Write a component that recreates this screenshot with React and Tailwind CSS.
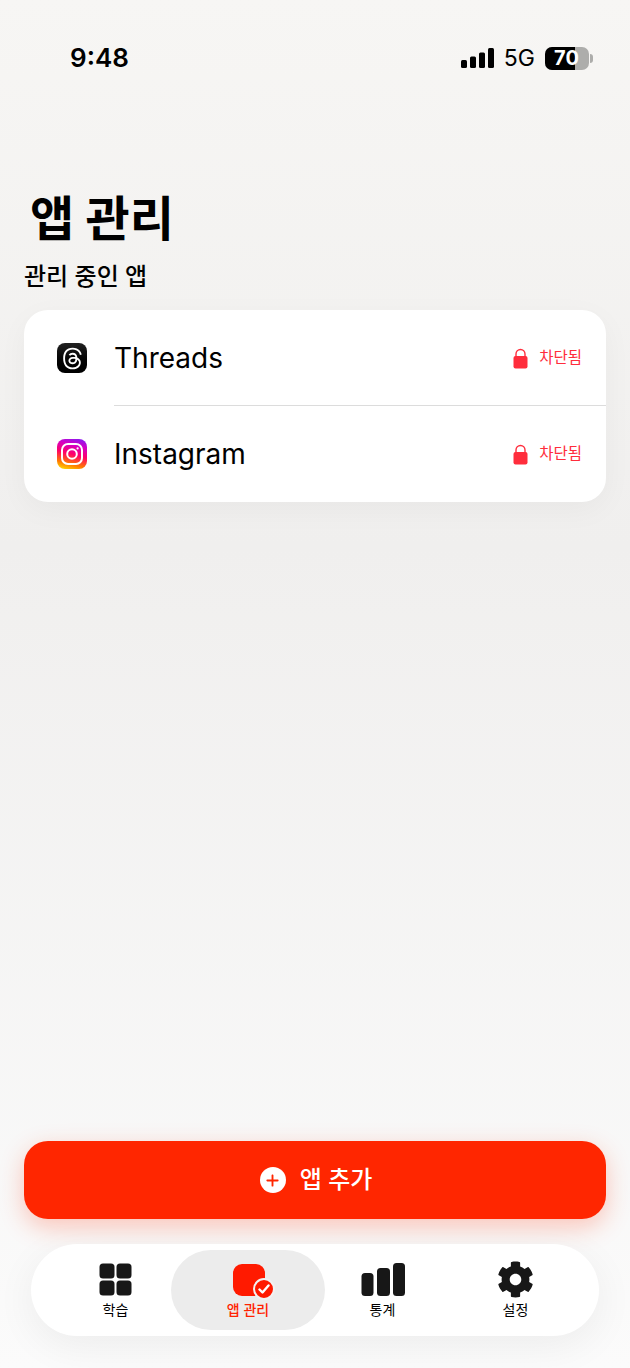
import { FaThreads, FaPlus } from 'react-icons/fa6';
import { FaCog } from 'react-icons/fa';

const sans = "font-['Inter','Noto_Sans_CJK_KR',sans-serif]";

function Signal() {
    return (
        <svg width="33" height="20" viewBox="0 0 33 20" fill="#000">
            <rect x="0" y="12" width="6" height="8" rx="1.5" />
            <rect x="9" y="8.5" width="6" height="11.5" rx="1.5" />
            <rect x="18" y="4.5" width="6" height="15.5" rx="1.5" />
            <rect x="27" y="0" width="6" height="20" rx="1.5" />
        </svg>
    );
}

function Battery() {
    return (
        <div className="flex items-center gap-[1px]">
            <div className="relative w-[44px] h-[23px] rounded-[7px] overflow-hidden bg-[#adadab]">
                <div className="absolute left-0 top-0 bottom-0 w-[30px] bg-black" />
                <span className="absolute inset-0 flex items-center justify-center pr-[1px] text-[20px] font-bold text-white leading-none">70</span>
            </div>
            <div className="w-[3px] h-[9px] rounded-r-full bg-[#adadab]" />
        </div>
    );
}

function ThreadsIcon() {
    return (
        <div className="w-[30px] h-[30px] rounded-[8px] bg-gradient-to-b from-[#222] to-black flex items-center justify-center">
            <FaThreads className="w-[23px] h-[23px] text-white" />
        </div>
    );
}

function InstagramIcon() {
    return (
        <div className="w-[30px] h-[30px] rounded-[8px] bg-[linear-gradient(15deg,#ffd600_4%,#ff7a00_22%,#ff0069_50%,#d300c5_75%,#7a20fa_100%)] flex items-center justify-center">
            <svg width="24" height="24" viewBox="0 0 24 24" fill="none" stroke="#fff" strokeWidth="2">
                <rect x="2" y="2" width="20" height="20" rx="6" />
                <circle cx="12" cy="12" r="4.8" />
                <circle cx="17.6" cy="6.4" r="1.1" fill="#fff" stroke="none" />
            </svg>
        </div>
    );
}

function Lock() {
    return (
        <svg width="15" height="21" viewBox="0 0 15 21">
            <path d="M3 10V6a4.5 4.5 0 0 1 9 0v4" fill="none" stroke="#ff2d3c" strokeWidth="1.4" />
            <rect x="0.5" y="8" width="14" height="12.5" rx="2" fill="#ff2d3c" />
        </svg>
    );
}

function AppRow({ icon, name, divider }) {
    return (
        <div className="relative h-[96px] flex items-center pl-[33px] pr-[24px]">
            {icon}
            <span className="ml-[27px] text-[28px] text-black">{name}</span>
            <div className="ml-auto flex items-center gap-[11px]">
                <Lock />
                <span className="text-[15.5px] text-[#ff2d3c]">차단됨</span>
            </div>
            {divider && <div className="absolute left-[90px] right-0 bottom-0 h-[1px] bg-[#dcdcdc]" />}
        </div>
    );
}

function NavItem({ icon, label, active }) {
    return (
        <div className={`flex flex-col items-center justify-center h-[80px] rounded-[40px] ${active ? 'w-[154px] -ml-[11px] -mr-[9px] bg-[#ececec]' : 'w-[133px]'}`}>
            <div className="h-[36px] flex items-center justify-center">{icon}</div>
            <span className={`mt-[3px] text-[14px] leading-[18px] ${active ? 'font-medium text-[#ff2200]' : 'font-normal text-black'}`}>{label}</span>
        </div>
    );
}

export default function App() {
    return (
        <div className={`${sans} w-[630px] h-[1368px] flex flex-col overflow-hidden bg-gradient-to-b from-[#f7f6f4] via-[#f0efee] via-40% to-[#fbfbfb]`}>
            {/* status bar */}
            <div className="h-[116px] shrink-0 flex justify-between items-start pt-[40px] pl-[70px] pr-[37px]">
                <span className="text-[26px] leading-[36px] font-semibold text-black">9:48</span>
                <div className="flex items-center gap-[11px] h-[36px]">
                    <Signal />
                    <span className="text-[23px] text-black -mx-[1px]">5G</span>
                    <Battery />
                </div>
            </div>

            <h1 className="mt-[70px] ml-[30px] text-[48px] leading-[66px] font-bold text-black">앱 관리</h1>
            <h2 className="mt-[8px] ml-[24px] text-[24px] leading-[34px] font-medium text-black">관리 중인 앱</h2>

            <div className="mt-[16px] mx-[24px] bg-white rounded-[24px] shadow-[0_8px_30px_rgba(0,0,0,0.04)]">
                <AppRow icon={<ThreadsIcon />} name="Threads" divider />
                <AppRow icon={<InstagramIcon />} name="Instagram" />
            </div>

            <div className="flex-1" />

            <button className="mx-[24px] h-[78px] shrink-0 rounded-[24px] bg-[#ff2600] shadow-[0_8px_24px_rgba(255,60,20,0.28)] flex items-center justify-center gap-[14px] pl-[2px]">
                <span className="w-[26px] h-[26px] rounded-full bg-white flex items-center justify-center">
                    <FaPlus className="w-[15px] h-[15px] text-[#ff2600]" />
                </span>
                <span className="text-[24px] font-medium text-white">앱 추가</span>
            </button>

            <nav className="mt-[25px] mb-[32px] mx-[31px] h-[92px] shrink-0 rounded-[46px] bg-white shadow-[0_10px_40px_rgba(0,0,0,0.06)] flex items-center pl-[18px]">
                <NavItem
                    label="학습"
                    icon={
                        <svg width="33" height="33" viewBox="0 0 33 33" fill="#171717">
                            <rect x="0.5" y="0.5" width="15" height="15" rx="3.5" />
                            <rect x="17.5" y="0.5" width="15" height="15" rx="3.5" />
                            <rect x="0.5" y="17.5" width="15" height="15" rx="3.5" />
                            <rect x="17.5" y="17.5" width="15" height="15" rx="3.5" />
                        </svg>
                    }
                />
                <NavItem
                    active
                    label="앱 관리"
                    icon={
                        <div className="relative w-[40px] h-[34px]">
                            <div className="absolute left-[5px] top-[1px] w-[32px] h-[32px] rounded-[9px] bg-[#ff1a00]" />
                            <div className="absolute left-[25px] top-[15px] w-[22px] h-[22px] rounded-full bg-[#ff1a00] border-[2px] border-[#f2f2f2] flex items-center justify-center">
                                <svg width="12" height="12" viewBox="0 0 12 12" fill="none" stroke="#fff" strokeWidth="2.4" strokeLinecap="round" strokeLinejoin="round">
                                    <path d="M1.5 6.5 4.5 9.5 10.5 2.5" />
                                </svg>
                            </div>
                        </div>
                    }
                />
                <NavItem
                    label="통계"
                    icon={
                        <svg width="44" height="33" viewBox="0 0 44 33" fill="#171717">
                            <rect x="0.5" y="10" width="12" height="23" rx="3.5" />
                            <rect x="16" y="5" width="13" height="28" rx="3.5" />
                            <rect x="32" y="0" width="12" height="33" rx="3.5" />
                        </svg>
                    }
                />
                <NavItem label="설정" icon={<FaCog className="w-[37px] h-[37px] text-[#171717]" />} />
            </nav>
        </div>
    );
}
